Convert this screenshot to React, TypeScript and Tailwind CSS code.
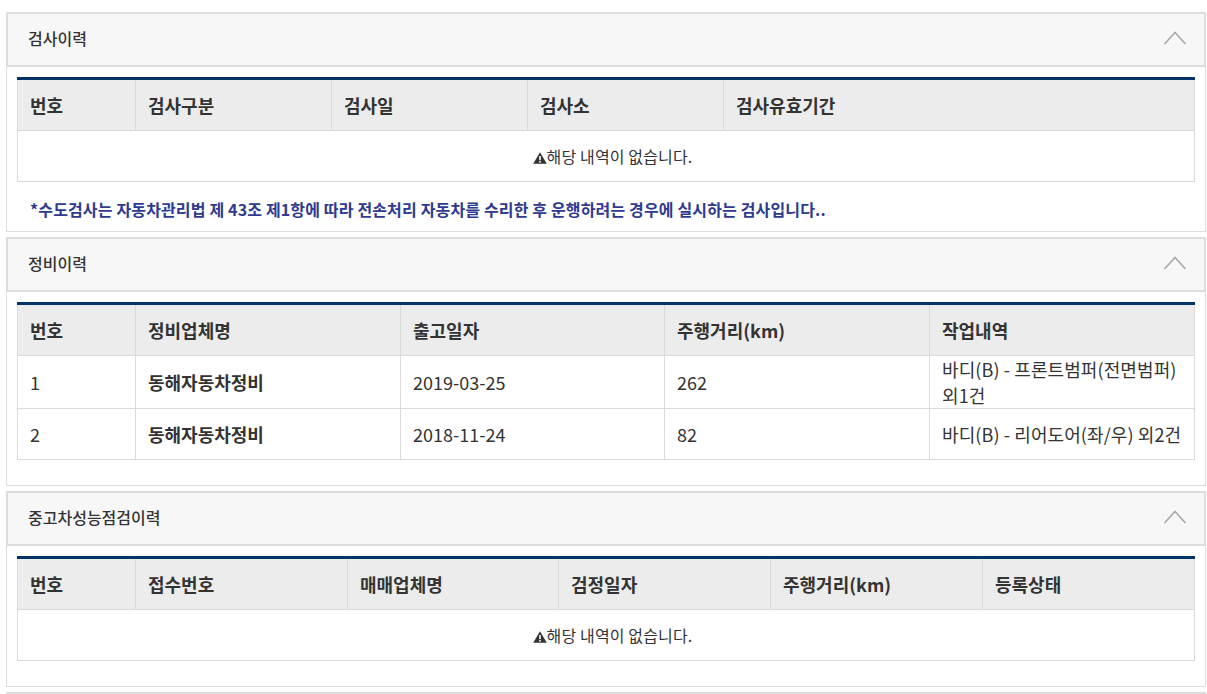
import React from 'react';

const font = "font-['Noto_Sans_CJK_KR','Noto_Sans',sans-serif]";

const Chevron = () => (
  <svg width="24" height="16" viewBox="0 0 24 16" fill="none" className="mr-[17px] mb-[4px]">
    <path d="M1.5 14L12 2.5L22.5 14" stroke="#a8a8a8" strokeWidth="1.6" />
  </svg>
);

const Warning = () => (
  <svg width="14" height="12" viewBox="0 0 14 12" className="inline-block mb-[1px]">
    <path d="M7 0.3L13.8 11.8H0.2Z" fill="#333" />
    <rect x="6.2" y="4" width="1.6" height="4.2" fill="#fff" />
    <rect x="6.2" y="9" width="1.6" height="1.6" fill="#fff" />
  </svg>
);

const Head = ({ cols }: { cols: { label: string; w: number }[] }) => (
  <>
    <colgroup>
      {cols.map((c) => (
        <col key={c.label} style={{ width: c.w }} />
      ))}
    </colgroup>
    <thead>
      <tr className="h-[52px] bg-[#ececec]">
        {cols.map((c) => (
          <th
            key={c.label}
            className="border-l border-r border-b border-[#dadada] px-3 pt-[1px] text-left text-[18px] font-bold text-[#333]"
          >
            {c.label}
          </th>
        ))}
      </tr>
    </thead>
  </>
);

const Empty = ({ span }: { span: number }) => (
  <tr className="h-[51px]">
    <td colSpan={span} className="border border-t-0 border-[#dadada] pl-[13px] text-center text-[16px] tracking-[0.15px] text-[#333]">
      <Warning />
      해당 내역이 없습니다.
    </td>
  </tr>
);

const Panel = ({ title, children, className }: { title: string; children: React.ReactNode; className: string }) => (
  <section className={`border border-[#dddddd] bg-white ${className}`}>
    <div className="-m-px flex h-[55px] items-center justify-between border-2 border-[#dddddd] bg-[#f7f7f7] pl-[20px]">
      <h3 className="mb-[4px] text-[16px] font-medium text-[#333]">{title}</h3>
      <Chevron />
    </div>
    <div className="pl-[10px] pr-[10px] pt-[11px]">{children}</div>
  </section>
);

const tableCls = 'w-[1177px] table-fixed border-collapse border-t-[3px] border-[#003366]';
const cell = 'border border-t-0 border-[#dadada] px-3';

const App = () => {
  return (
    <div className={`${font} h-[694px] overflow-hidden bg-white pl-[6px] pr-[1px] pt-3`}>
      <Panel title="검사이력" className="h-[220px]">
        <table className={tableCls}>
          <Head
            cols={[
              { label: '번호', w: 118 },
              { label: '검사구분', w: 196 },
              { label: '검사일', w: 196 },
              { label: '검사소', w: 196 },
              { label: '검사유효기간', w: 471 },
            ]}
          />
          <tbody>
            <Empty span={5} />
          </tbody>
        </table>
        <p className="mt-[17px] pl-[13px] text-[16px] font-bold leading-5 tracking-[0.15px] text-[#2e3a8f]">
          *수도검사는 자동차관리법 제 43조 제1항에 따라 전손처리 자동차를 수리한 후 운행하려는 경우에 실시하는 검사입니다..
        </p>
      </Panel>

      <Panel title="정비이력" className="mt-[5px] h-[249px]">
        <table className={tableCls}>
          <Head
            cols={[
              { label: '번호', w: 118 },
              { label: '정비업체명', w: 265 },
              { label: '출고일자', w: 264 },
              { label: '주행거리(km)', w: 265 },
              { label: '작업내역', w: 265 },
            ]}
          />
          <tbody className="text-[18px] text-[#333]">
            <tr className="h-[53px]">
              <td className={cell}>1</td>
              <td className={`${cell} font-bold`}>동해자동차정비</td>
              <td className={cell}>2019-03-25</td>
              <td className={cell}>262</td>
              <td className={`${cell} leading-[26px] tracking-[0.1px]`}>바디(B) - 프론트범퍼(전면범퍼) 외1건</td>
            </tr>
            <tr className="h-[51px]">
              <td className={cell}>2</td>
              <td className={`${cell} font-bold`}>동해자동차정비</td>
              <td className={cell}>2018-11-24</td>
              <td className={cell}>82</td>
              <td className={`${cell} tracking-[0.1px]`}>바디(B) - 리어도어(좌/우) 외2건</td>
            </tr>
          </tbody>
        </table>
      </Panel>

      <Panel title="중고차성능점검이력" className="mt-[5px] h-[196px]">
        <table className={tableCls}>
          <Head
            cols={[
              { label: '번호', w: 118 },
              { label: '접수번호', w: 212 },
              { label: '매매업체명', w: 211 },
              { label: '검정일자', w: 212 },
              { label: '주행거리(km)', w: 212 },
              { label: '등록상태', w: 212 },
            ]}
          />
          <tbody>
            <Empty span={6} />
          </tbody>
        </table>
      </Panel>

      <div className="mt-[5px] h-[4px] border-t-2 border-[#dddddd]" />
    </div>
  );
};

export default App;
